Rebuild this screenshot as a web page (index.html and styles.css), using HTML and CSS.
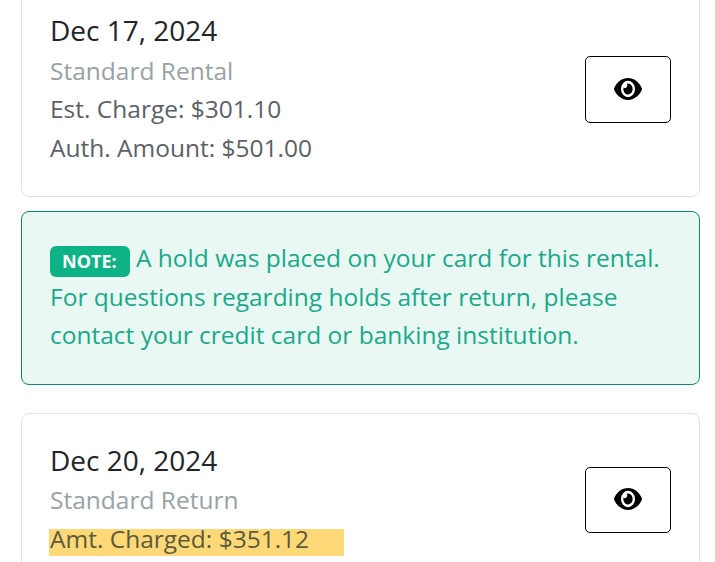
FILE: index.html
```html
<!DOCTYPE html>
<html lang="en">
<head>
<meta charset="utf-8">
<title>Rental activity</title>
<link rel="stylesheet" href="styles.css">
</head>
<body>
<main class="list">
  <section class="card">
    <div class="info">
      <div class="date">Dec 17, 2024</div>
      <div class="type">Standard Rental</div>
      <div class="line">Est. Charge: $301.10</div>
      <div class="line">Auth. Amount: $501.00</div>
    </div>
    <button class="view" type="button" aria-label="View">
      <svg class="eye" viewBox="0 64 576 384" width="28" height="22" preserveAspectRatio="none"><path d="M572.52 241.4C518.29 135.59 410.93 64 288 64S57.68 135.64 3.48 241.41a32.35 32.35 0 0 0 0 29.19C57.71 376.41 165.07 448 288 448s230.32-71.64 284.52-177.41a32.35 32.35 0 0 0 0-29.19zM288 400a144 144 0 1 1 144-144 143.93 143.93 0 0 1-144 144zm0-240a95.31 95.31 0 0 0-25.31 3.79 47.85 47.85 0 0 1-66.9 66.9A95.78 95.78 0 1 0 288 160z"/></svg>
    </button>
  </section>
  <section class="note">
    <span class="badge">NOTE:</span> A hold was placed on your card for this rental. For questions regarding holds after return, please contact your credit card or banking institution.
  </section>
  <section class="card">
    <div class="info">
      <div class="date">Dec 20, 2024</div>
      <div class="type">Standard Return</div>
      <div class="line"><mark class="hl">Amt. Charged: $351.12</mark></div>
    </div>
    <button class="view" type="button" aria-label="View">
      <svg class="eye" viewBox="0 64 576 384" width="28" height="22" preserveAspectRatio="none"><path d="M572.52 241.4C518.29 135.59 410.93 64 288 64S57.68 135.64 3.48 241.41a32.35 32.35 0 0 0 0 29.19C57.71 376.41 165.07 448 288 448s230.32-71.64 284.52-177.41a32.35 32.35 0 0 0 0-29.19zM288 400a144 144 0 1 1 144-144 143.93 143.93 0 0 1-144 144zm0-240a95.31 95.31 0 0 0-25.31 3.79 47.85 47.85 0 0 1-66.9 66.9A95.78 95.78 0 1 0 288 160z"/></svg>
    </button>
  </section>
</main>
</body>
</html>
```
FILE: styles.css
```css
html, body {
  margin: 0;
  height: 100%;
  overflow: hidden;
  background: #fff;
}
body {
  font-family: "Open Sans", sans-serif;
  font-size: 24.5px;
  line-height: 38.5px;
  color: #5b6166;
}
.list {
  display: flex;
  flex-direction: column;
  padding: 0 15px 0 21px;
  margin-top: -16.9px;
}
.card {
  display: flex;
  align-items: center;
  justify-content: space-between;
  padding: 28px 28px 28.5px;
  border: 1px solid #dee2e6;
  border-radius: 8px;
  background: #fff;
}
.date {
  font-size: 28px;
  line-height: 37px;
  margin-bottom: 2.5px;
  color: #212529;
}
.type {
  color: #98a2a6;
}
.line {
  color: #5b6166;
}
.hl {
  display: inline-block;
  background: #ffd978;
  color: #5b5a3a;
  line-height: 19px;
  padding: 0 35px 8px 1px;
  margin-left: -1px;
}
.view {
  display: flex;
  align-items: center;
  justify-content: center;
  width: 86px;
  height: 66.5px;
  padding: 0;
  background: #fff;
  border: 1px solid #000;
  border-radius: 5px;
}
.eye {
  display: block;
  margin-bottom: 2px;
}
.note {
  margin: 14px 0 27.9px;
  padding: 27.6px 28px 29.4px;
  background: #e9f8f3;
  border: 1px solid #0f8a70;
  border-radius: 8px;
  color: #19a98a;
}
.badge {
  display: inline-block;
  padding: 0 13px 0 12px;
  background: #0db385;
  color: #fff;
  font-size: 18px;
  font-weight: 700;
  line-height: 31px;
  vertical-align: -1px;
  border-radius: 6px;
}
```
